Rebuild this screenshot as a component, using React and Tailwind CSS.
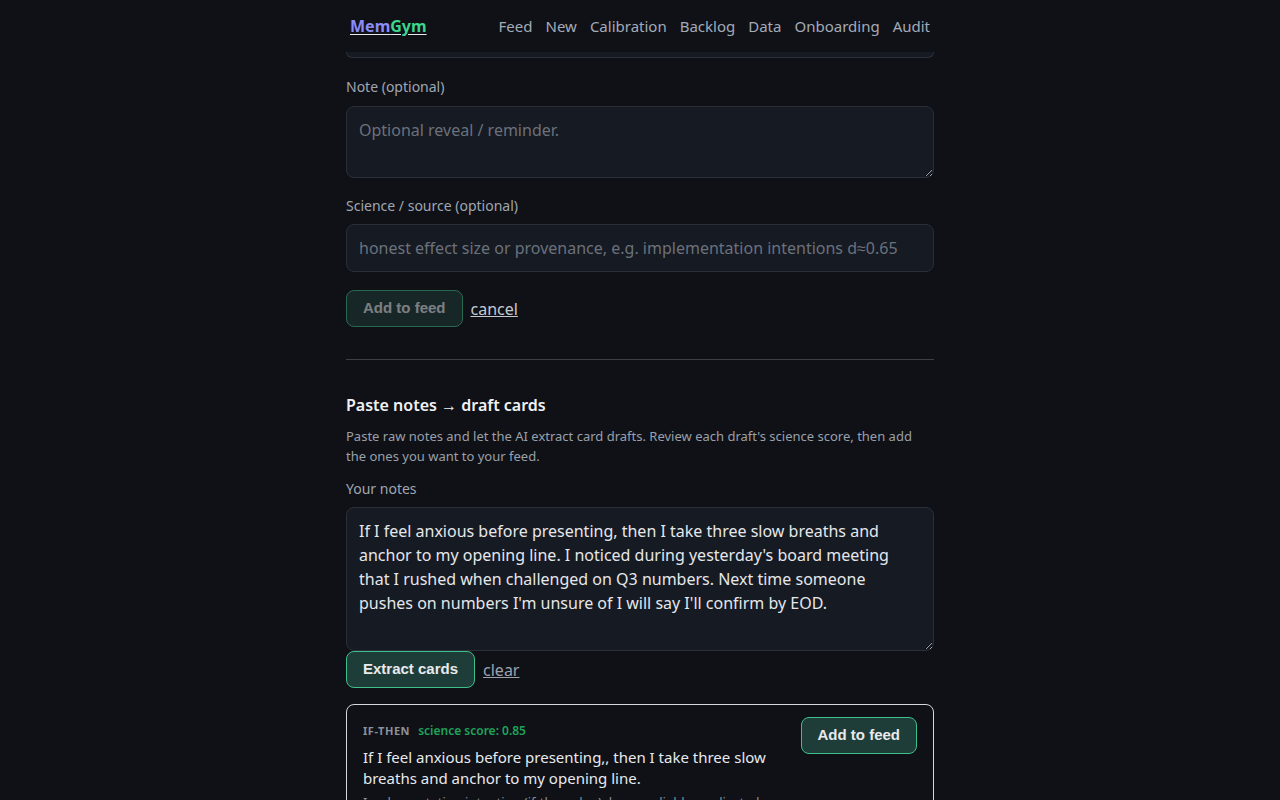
import React from "react";

const font = { fontFamily: '"Noto Sans", "Liberation Sans", sans-serif' };

function Btn({ children, disabled }) {
  return (
    <button
      className={
        "h-[37px] px-4 rounded-lg border border-[#3fbf8a] bg-[#1f3d38] text-[15px] font-bold text-[#e8eaed] font-['Liberation_Sans',Arial,sans-serif] " +
        (disabled ? "opacity-50" : "")
      }
    >
      {children}
    </button>
  );
}

export default function App() {
  return (
    <div className="min-h-screen bg-[#0f1117] text-[#e5e7eb]" style={font}>
      <header className="h-[52px] w-[588px] mx-auto flex items-center justify-between">
        <a className="pl-1 text-base font-bold leading-6 underline underline-offset-2">
          <span className="text-[#8b8cf7]">Mem</span>
          <span className="text-[#3dd68c]">Gym</span>
        </a>
        <nav className="flex items-center gap-[13px] text-[15px] text-[#a3abb7] pr-1">
          <span>Feed</span>
          <span>New</span>
          <span>Calibration</span>
          <span>Backlog</span>
          <span>Data</span>
          <span>Onboarding</span>
          <span>Audit</span>
        </nav>
      </header>

      <main className="w-[588px] mx-auto pb-10">
        <div className="h-[6px] border border-t-0 border-[#2a2f3a] bg-[#161a22] rounded-b-lg"></div>

        <label className="block mt-[19px] text-sm leading-5 text-[#a0a6b0]">Note (optional)</label>
        <textarea
          className="block mt-[9px] w-full h-[72px] px-3 py-[11px] text-base leading-6 bg-[#161a22] border border-[#2a2f3a] rounded-lg text-[#e5e7eb] placeholder:text-[#6b717c] outline-none"
          placeholder="Optional reveal / reminder."
        ></textarea>

        <label className="block mt-[18px] text-sm leading-5 text-[#a0a6b0]">Science / source (optional)</label>
        <input
          className="block mt-[8px] w-full h-[48px] px-3 text-base bg-[#161a22] border border-[#2a2f3a] rounded-lg text-[#e5e7eb] placeholder:text-[#6b717c] outline-none"
          placeholder="honest effect size or provenance, e.g. implementation intentions d≈0.65"
        />

        <div className="mt-[18px] flex items-center gap-2">
          <Btn disabled>Add to feed</Btn>
          <a className="text-base underline text-[#c5c9d0]">cancel</a>
        </div>

        <div className="mt-[32px] border-t border-[#3a3e46]"></div>

        <h2 className="mt-[33px] text-base leading-6 font-semibold text-[#f0f1f3]">Paste notes → draft cards</h2>
        <p className="mt-[9px] text-[13px] leading-5 text-[#9aa0aa]">
          Paste raw notes and let the AI extract card drafts. Review each draft's science score, then add the ones you want to your feed.
        </p>

        <label className="block mt-[13px] text-sm leading-5 text-[#a0a6b0]">Your notes</label>
        <textarea
          className="block mt-[8px] w-full h-[144px] px-3 py-[11px] text-base leading-6 bg-[#161a22] border border-[#2a2f3a] rounded-lg text-[#e5e7eb] outline-none"
          defaultValue="If I feel anxious before presenting, then I take three slow breaths and anchor to my opening line. I noticed during yesterday's board meeting that I rushed when challenged on Q3 numbers. Next time someone pushes on numbers I'm unsure of I will say I'll confirm by EOD."
        ></textarea>

        <div className="flex items-center gap-2">
          <Btn>Extract cards</Btn>
          <a className="text-base underline text-[#9ca3af]">clear</a>
        </div>

        <div className="mt-4 border border-[#d4d7dc] rounded-lg px-4 pt-3 pb-4 flex gap-4 items-start">
          <div className="flex-1 pt-[6px]">
            <div className="flex items-center gap-2 h-4">
              <span className="text-[11px] font-bold tracking-wider text-[#8b9099]">IF-THEN</span>
              <span className="text-xs font-semibold text-[#1fa35a]">science score: 0.85</span>
            </div>
            <p className="mt-[8px] text-[15px] leading-[21px] text-[#e8eaed]">
              If I feel anxious before presenting,, then I take three slow breaths and anchor to my opening line.
            </p>
            <p className="mt-[3px] text-[13px] leading-5 text-[#8b9099]">
              Implementation intention (if-then plan): large, reliable, replicated effect (d≈0.65).
            </p>
          </div>
          <Btn>Add to feed</Btn>
        </div>
      </main>
    </div>
  );
}
